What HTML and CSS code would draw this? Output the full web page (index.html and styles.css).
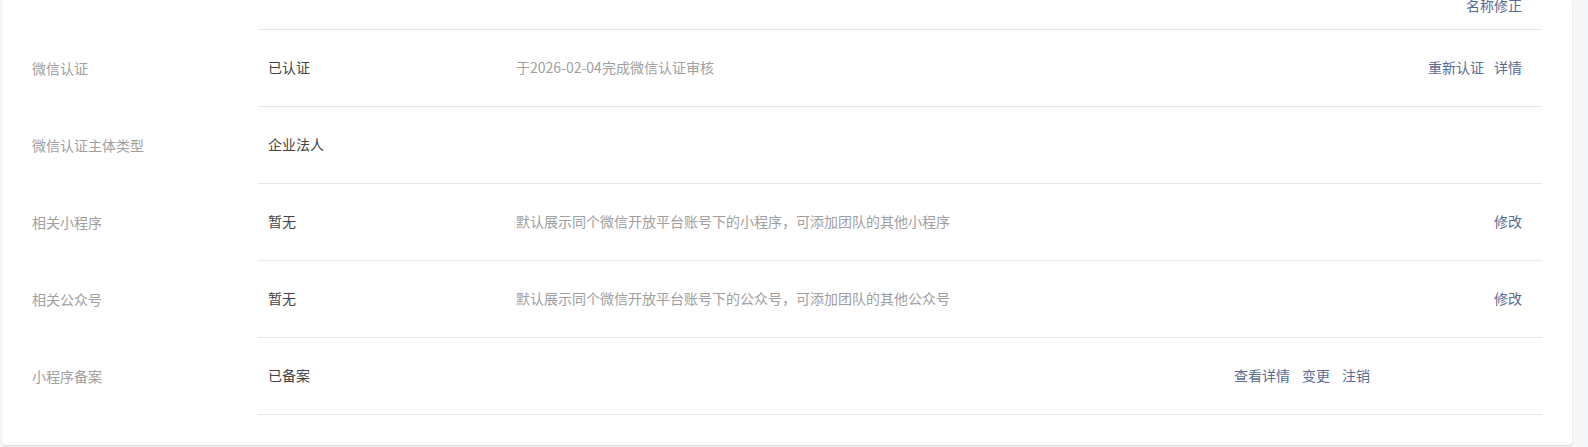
FILE: index.html
```html
<!DOCTYPE html>
<html lang="zh-CN">
<head>
    <meta charset="UTF-8">
    <title>小程序设置</title>
    <link rel="stylesheet" href="styles.css">
</head>
<body>
    <div class="page">
        <div class="card">
            <!-- row scrolled mostly out of view -->
            <div class="info-row info-row--cut">
                <div class="info-label"></div>
                <div class="info-body">
                    <div class="info-value"></div>
                    <div class="info-desc"></div>
                    <div class="info-actions"><a href="#">名称修正</a></div>
                </div>
            </div>
            <div class="info-row">
                <div class="info-label">微信认证</div>
                <div class="info-body">
                    <div class="info-value">已认证</div>
                    <div class="info-desc">于2026-02-04完成微信认证审核</div>
                    <div class="info-actions"><a href="#">重新认证</a><a href="#">详情</a></div>
                </div>
            </div>
            <div class="info-row">
                <div class="info-label">微信认证主体类型</div>
                <div class="info-body">
                    <div class="info-value">企业法人</div>
                    <div class="info-desc"></div>
                    <div class="info-actions"></div>
                </div>
            </div>
            <div class="info-row">
                <div class="info-label">相关小程序</div>
                <div class="info-body">
                    <div class="info-value">暂无</div>
                    <div class="info-desc">默认展示同个微信开放平台账号下的小程序，可添加团队的其他小程序</div>
                    <div class="info-actions"><a href="#">修改</a></div>
                </div>
            </div>
            <div class="info-row">
                <div class="info-label">相关公众号</div>
                <div class="info-body">
                    <div class="info-value">暂无</div>
                    <div class="info-desc">默认展示同个微信开放平台账号下的公众号，可添加团队的其他公众号</div>
                    <div class="info-actions"><a href="#">修改</a></div>
                </div>
            </div>
            <div class="info-row">
                <div class="info-label">小程序备案</div>
                <div class="info-body">
                    <div class="info-value">已备案</div>
                    <div class="info-desc"></div>
                    <div class="info-actions info-actions--wide"><a href="#">查看详情</a><a href="#">变更</a><a href="#">注销</a></div>
                </div>
            </div>
        </div>
    </div>
</body>
</html>
```

FILE: styles.css
```css
/* Base */
html,
body {
    margin: 0;
    background: #f6f7f9;
    font-family: "Noto Sans CJK SC", "Microsoft YaHei", sans-serif;
    font-size: 14px;
    line-height: 20px;
    color: #444;
}

a {
    color: #576b95;
    text-decoration: none;
}

.page {
    padding: 0 16px 3px 2px;
}

/* Card */
.card {
    background: #fff;
    border-radius: 0 0 4px 4px;
    box-shadow: 0 1px 2px rgba(140, 145, 155, 0.35);
    padding: 0 30px 30px;
}

/* Rows */
.info-row {
    display: flex;
}

.info-label {
    width: 226px;
    flex-shrink: 0;
    display: flex;
    align-items: center;
    padding-bottom: 2px;
    color: #a0a0a0;
}

.info-body {
    flex: 1;
    display: flex;
    align-items: center;
    height: 74px;
    padding-bottom: 2px;
    border-bottom: 1px solid #e7e7eb;
}

.info-value {
    width: 248px;
    padding-left: 10px;
    flex-shrink: 0;
}

.info-desc {
    flex: 1;
    color: #a0a0a0;
}

.info-actions {
    display: flex;
    gap: 10px;
    padding-right: 20px;
    white-space: nowrap;
}

.info-actions--wide {
    gap: 12px;
    padding-right: 172px;
}

.info-row--cut .info-body {
    height: 29px;
    padding-bottom: 0;
    align-items: flex-end;
}

.info-row--cut .info-actions {
    padding-bottom: 14px;
}
```
